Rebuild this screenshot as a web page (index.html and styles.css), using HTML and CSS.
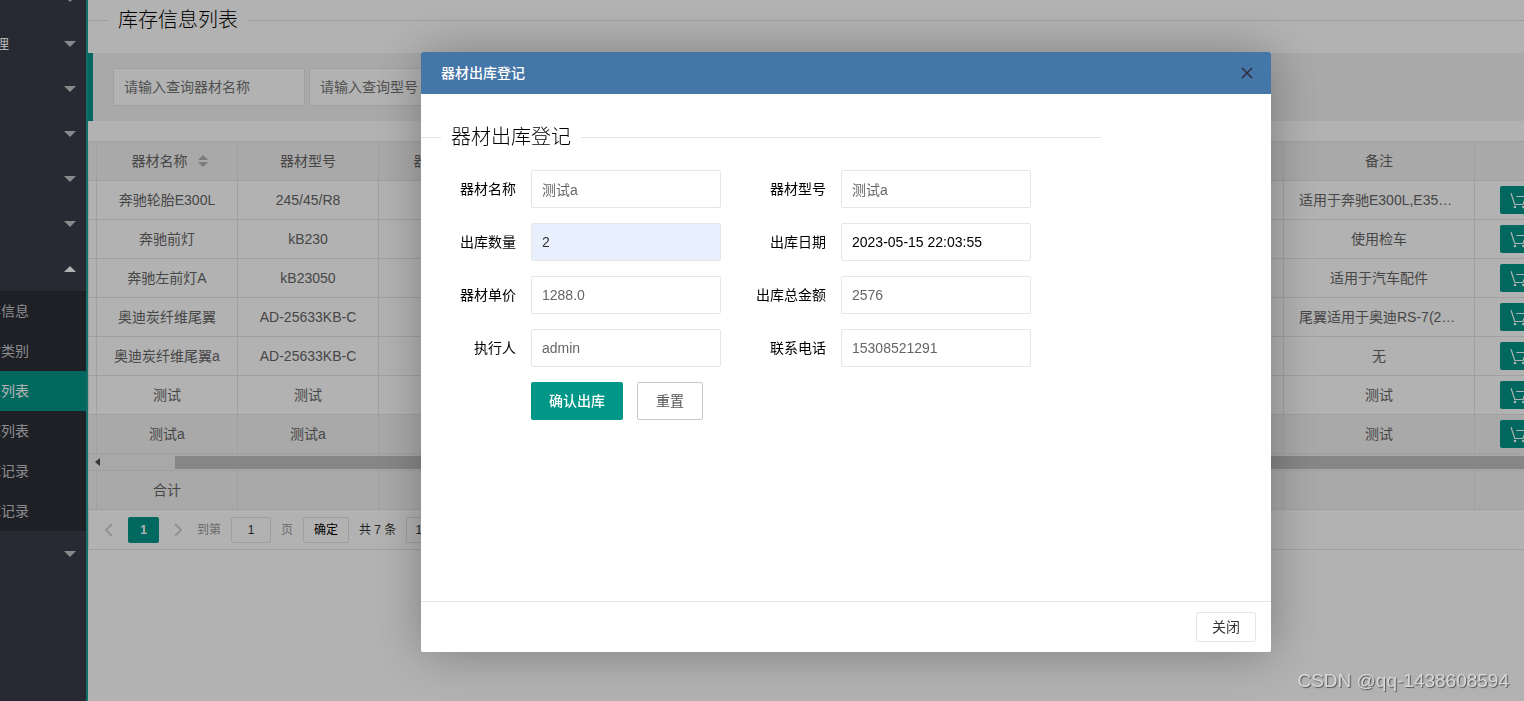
FILE: index.html
```html
<!DOCTYPE html>
<html lang="zh-CN">
<head>
<meta charset="utf-8">
<title>库存信息列表</title>
<link rel="stylesheet" href="styles.css">
</head>
<body>
<svg class="sprite" aria-hidden="true">
  <symbol id="cart" viewBox="0 0 18 18">
    <path d="M1 2.300L4.800 13.500h8.200L16 5.500H6.300" fill="none" stroke="currentColor" stroke-width="1.200"/>
    <circle cx="5" cy="16" r="1.300" fill="currentColor"/>
    <circle cx="13.300" cy="16" r="1.300" fill="currentColor"/>
  </symbol>
</svg>
<div class="layout">
  <nav class="side">
    <ul class="menu">
      <li><a class="item" href="#"><i class="caret"></i></a></li>
      <li><a class="item" href="#"><span class="label">理</span><i class="caret"></i></a></li>
      <li><a class="item" href="#"><i class="caret"></i></a></li>
      <li><a class="item" href="#"><i class="caret"></i></a></li>
      <li><a class="item" href="#"><i class="caret"></i></a></li>
      <li><a class="item" href="#"><i class="caret"></i></a></li>
      <li><a class="item" href="#"><i class="caret caret-up"></i></a>
        <ul class="submenu">
          <li><a class="subitem" href="#"><span class="label">存信息</span></a></li>
          <li><a class="subitem" href="#"><span class="label">材类别</span></a></li>
          <li><a class="subitem active" href="#"><span class="label">息列表</span></a></li>
          <li><a class="subitem" href="#"><span class="label">库列表</span></a></li>
          <li><a class="subitem" href="#"><span class="label">库记录</span></a></li>
          <li><a class="subitem" href="#"><span class="label">库记录</span></a></li>
        </ul>
      </li>
      <li><a class="item" href="#"><i class="caret"></i></a></li>
    </ul>
  </nav>
  <main class="main">
    <fieldset class="title"><legend>库存信息列表</legend></fieldset>
    <form class="search">
      <input class="field" type="text" placeholder="请输入查询器材名称" aria-label="器材名称">
      <input class="field" type="text" placeholder="请输入查询型号" aria-label="型号">
    </form>
    <section class="grid">
      <table class="data">
        <colgroup><col class="c-edge"><col class="c-std"><col class="c-std"><col class="c-std"><col><col class="c-note"><col class="c-op"></colgroup>
        <thead>
          <tr><th></th><th><span class="sortable">器材名称<svg class="sort" viewBox="0 0 10 14"><path d="M5 1l5 5H0zM5 13l5-5H0z"/></svg></span></th><th>器材型号</th><th><span class="sortable">器材数量<svg class="sort" viewBox="0 0 10 14"><path d="M5 1l5 5H0zM5 13l5-5H0z"/></svg></span></th><th></th><th>备注</th><th></th></tr>
        </thead>
        <tbody>
          <tr><td></td><td>奔驰轮胎E300L</td><td>245/45/R8</td><td></td><td></td><td>适用于奔驰E300L,E350L,E260L</td><td class="op"><button class="out" aria-label="出库"><svg><use href="#cart"/></svg></button></td></tr>
          <tr><td></td><td>奔驰前灯</td><td>kB230</td><td></td><td></td><td>使用检车</td><td class="op"><button class="out" aria-label="出库"><svg><use href="#cart"/></svg></button></td></tr>
          <tr><td></td><td>奔驰左前灯A</td><td>kB23050</td><td></td><td></td><td>适用于汽车配件</td><td class="op"><button class="out" aria-label="出库"><svg><use href="#cart"/></svg></button></td></tr>
          <tr><td></td><td>奥迪炭纤维尾翼</td><td>AD-25633KB-C</td><td></td><td></td><td>尾翼适用于奥迪RS-7(2023)</td><td class="op"><button class="out" aria-label="出库"><svg><use href="#cart"/></svg></button></td></tr>
          <tr><td></td><td>奥迪炭纤维尾翼a</td><td>AD-25633KB-C</td><td></td><td></td><td>无</td><td class="op"><button class="out" aria-label="出库"><svg><use href="#cart"/></svg></button></td></tr>
          <tr><td></td><td>测试</td><td>测试</td><td></td><td></td><td>测试</td><td class="op"><button class="out" aria-label="出库"><svg><use href="#cart"/></svg></button></td></tr>
          <tr class="hover"><td></td><td>测试a</td><td>测试a</td><td></td><td></td><td>测试</td><td class="op"><button class="out" aria-label="出库"><svg><use href="#cart"/></svg></button></td></tr>
        </tbody>
      </table>
      <div class="scroll"><svg class="arrow" viewBox="0 0 5 8"><path d="M5 0v8L0 4z"/></svg><div class="thumb"></div></div>
      <table class="data total">
        <colgroup><col class="c-edge"><col class="c-std"><col class="c-std"><col class="c-std"><col><col class="c-note"><col class="c-op"></colgroup>
        <tbody><tr><td></td><td>合计</td><td></td><td></td><td></td><td></td><td></td></tr></tbody>
      </table>
      <div class="pager">
        <button class="turn" aria-label="上一页"><svg viewBox="0 0 8 14"><path d="M7 1L1 7l6 6"/></svg></button>
        <span class="current">1</span>
        <button class="turn" aria-label="下一页"><svg viewBox="0 0 8 14"><path d="M1 1l6 6-6 6"/></svg></button>
        <label class="muted" for="page">到第</label>
        <input class="page" id="page" type="text" value="1">
        <span class="muted">页</span>
        <button class="go">确定</button>
        <span class="count">共 7 条</span>
        <select class="limit" aria-label="每页条数"><option>10 条/页</option></select>
      </div>
    </section>
  </main>
</div>
<div class="shade"></div>
<div class="dialog" role="dialog" aria-labelledby="dlg-title">
  <header class="dlg-head">
    <span id="dlg-title">器材出库登记</span>
    <button class="close" aria-label="关闭窗口"><svg viewBox="0 0 12 12"><path d="M1 1l10 10M11 1L1 11"/></svg></button>
  </header>
  <div class="dlg-body">
    <fieldset class="title"><legend>器材出库登记</legend></fieldset>
    <form class="form">
      <label for="name">器材名称</label><input class="field" id="name" value="测试a" readonly>
      <label for="model">器材型号</label><input class="field" id="model" value="测试a" readonly>
      <label for="qty">出库数量</label><input class="field filled" id="qty" value="2">
      <label for="date">出库日期</label><input class="field dark" id="date" value="2023-05-15 22:03:55">
      <label for="price">器材单价</label><input class="field" id="price" value="1288.0" readonly>
      <label for="sum">出库总金额</label><input class="field" id="sum" value="2576" readonly>
      <label for="person">执行人</label><input class="field" id="person" value="admin" readonly>
      <label for="phone">联系电话</label><input class="field" id="phone" value="15308521291" readonly>
      <div class="actions">
        <button class="btn primary" type="button">确认出库</button>
        <button class="btn plain" type="reset">重置</button>
      </div>
    </form>
  </div>
  <footer class="dlg-foot"><button class="dismiss">关闭</button></footer>
</div>
<div class="watermark">CSDN @qq-1438608594</div>
</body>
</html>
```

FILE: styles.css
```css
* { box-sizing: border-box; }
body {
  margin: 0;
  overflow: hidden;
  background: #fff;
  color: #000;
  font: 14px/24px "Liberation Sans", "Noto Sans CJK SC", sans-serif;
}
button, input, select { font: inherit; margin: 0; }
button { padding: 0; border: 0; background: none; }
ul { margin: 0; padding: 0; list-style: none; }
a { text-decoration: none; }
.sprite { display: none; }
.layout { display: flex; height: 100vh; overflow: hidden; }

.side {
  flex: 0 0 88px;
  overflow: hidden;
  background: #393d49;
  border-right: 2px solid #1aa094;
}
.menu { margin-top: -24px; }
.item, .subitem { display: flex; align-items: center; color: #fff; }
.item { height: 45px; padding-right: 10px; }
.item .label { width: 9px; }
.label { display: flex; justify-content: flex-end; width: 29px; overflow: hidden; white-space: nowrap; }
.caret {
  margin-left: auto;
  border: 6px solid transparent;
  border-top-color: #c4c5c8;
  border-bottom-width: 0;
}
.caret-up { border-width: 0 6px 6px; border-bottom-color: #fff; }
.submenu { background: #2b2e37; }
.subitem { height: 40px; color: #c8c9cc; }
.subitem.active { background: #009688; color: #fff; }

.main { flex: 1; min-width: 0; padding-top: 5px; }
.title { margin: 0; padding: 0; border: 0; border-top: 1px solid #e2e2e2; }
.main .title { padding-top: 5px; }
.title legend {
  margin-left: 20px;
  padding: 0 10px;
  font-size: 20px;
  font-weight: 300;
  line-height: 30px;
}
.search {
  display: flex;
  gap: 4px;
  margin-top: 13px;
  padding: 15px 20px;
  background: #f2f2f2;
  border-left: 5px solid #009688;
}
.field {
  width: 100%;
  height: 38px;
  padding: 0 10px;
  border: 1px solid #e6e6e6;
  border-radius: 2px;
  background: #fff;
  color: #666;
  outline: 0;
}
.field::placeholder { color: #757575; opacity: 1; }
.search .field { width: 192px; }

.grid { margin-top: 20px; border: 1px solid #e6e6e6; border-width: 1px 0 1px 1px; }
.data { width: 100%; table-layout: fixed; border-collapse: separate; border-spacing: 0; color: #666; }
.c-edge { width: 8px; }
.c-std { width: 141px; }
.c-note { width: 191px; }
.c-op { width: 49px; }
.data th, .data td {
  height: 39px;
  padding: 0 15px;
  border: 1px solid #e6e6e6;
  border-width: 0 1px 1px 0;
  font-weight: 400;
  text-align: center;
  white-space: nowrap;
  overflow: hidden;
  text-overflow: ellipsis;
}
.data th:first-child, .data td:first-child { padding: 0; }
.data th { background: #f2f2f2; }
.data th:nth-child(4), .data td:nth-child(2) { padding: 0 10px; }
.data th:last-child, .data td:last-child { border-right: 0; }
.hover td, .total td { background: #f2f2f2; }
.data .op { padding: 0 0 0 25px; text-align: left; text-overflow: clip; }
.sortable { display: inline-flex; align-items: center; gap: 10px; padding-left: 5px; }
.sort { width: 10px; height: 14px; fill: #b2b2b2; }
.out {
  display: flex;
  align-items: center;
  width: 60px;
  height: 28px;
  padding-left: 10px;
  border-radius: 2px;
  background: #009688;
  color: #fff;
}
.out svg { width: 18px; height: 18px; }
.scroll {
  display: flex;
  align-items: center;
  gap: 75px;
  height: 17px;
  padding-left: 6px;
  background: #f1f1f1;
  border-bottom: 1px solid #e6e6e6;
}
.arrow { width: 5px; height: 8px; fill: #505050; }
.thumb { flex: 1; height: 13px; background: #c1c1c1; }

.pager { display: flex; align-items: center; height: 39px; padding-left: 15px; font-size: 12px; color: #333; }
.pager > * { flex: none; }
.turn { display: flex; width: 10px; justify-content: center; }
.turn svg { width: 8px; height: 14px; fill: none; stroke: #d2d2d2; stroke-width: 2; }
.current {
  width: 31px;
  height: 26px;
  margin: 0 14px;
  border-radius: 2px;
  background: #009688;
  color: #fff;
  font-weight: 700;
  line-height: 26px;
  text-align: center;
}
.muted { color: #999; }
label.muted { margin-left: 14px; }
.page, .go, .limit { height: 26px; border: 1px solid #e2e2e2; border-radius: 2px; background: #fff; }
.page { width: 40px; margin: 0 10px; text-align: center; color: #333; }
.go { width: 46px; margin: 0 10px; color: #000; }
.limit { margin-left: 10px; padding: 0 4px; color: #333; }

.shade { position: fixed; inset: 0; background: rgba(0, 0, 0, .3); }
.dialog {
  position: fixed;
  top: 52px;
  left: 421px;
  display: flex;
  flex-direction: column;
  width: 850px;
  height: 600px;
  border-radius: 2px;
  background: #fff;
  box-shadow: 1px 1px 50px rgba(0, 0, 0, .3);
}
.dlg-head {
  display: flex;
  align-items: center;
  justify-content: space-between;
  height: 42px;
  padding: 0 18px 0 20px;
  border-radius: 2px 2px 0 0;
  background: #4476a7;
  color: #fff;
  font-weight: 500;
}
.close { display: flex; }
.close svg { width: 12px; height: 12px; fill: none; stroke: #2e2d3c; stroke-width: 1.5; }
.dlg-body { flex: 1; padding-top: 28px; }
.dlg-body .title { width: 680px; }
.form {
  display: grid;
  grid-template-columns: 110px 190px 120px 190px;
  gap: 15px 0;
  align-items: center;
  margin-top: 18px;
}
.form label { padding-right: 15px; text-align: right; }
.form .filled { background: #e8f0fe; color: #333; }
.form .dark { color: #000; }
.actions { grid-column: 2 / -1; display: flex; gap: 14px; }
.btn { height: 38px; padding: 0 18px; border-radius: 2px; }
.primary { background: #009688; color: #fff; font-weight: 500; }
.plain { border: 1px solid #c9c9c9; background: #fff; color: #555; }
.dlg-foot { display: flex; justify-content: flex-end; padding: 10px 15px; border-top: 1px solid #e6e6e6; }
.dismiss { width: 60px; height: 30px; border: 1px solid #e6e6e6; border-radius: 2px; color: #333; }
.watermark {
  position: fixed;
  right: 15px;
  bottom: 8px;
  color: #d8d8d8;
  font-size: 19px;
  text-shadow: 1px 1px 1px #555;
}
```
